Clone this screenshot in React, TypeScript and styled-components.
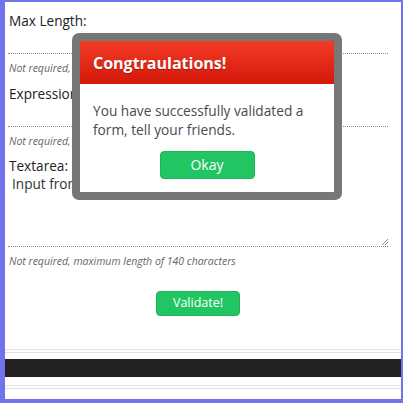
import React from "react";
import styled, { createGlobalStyle } from "styled-components";

const Global = createGlobalStyle`
  html, body { margin: 0; padding: 0; background: #fff; }
  * { box-sizing: border-box; }
`;

const Frame = styled.div`
  position: relative;
  width: 403px;
  height: 403px;
  border-style: solid;
  border-color: #7272ec;
  border-width: 2px 2px 4px 5px;
  background: #fff;
  font-family: "Open Sans", "Liberation Sans", sans-serif;
  color: #222;
  overflow: hidden;
  display: flex;
  flex-direction: column;
`;

const Form = styled.form`
  display: flex;
  flex-direction: column;
  width: 380px;
  margin-left: 3px;
  padding-top: 10px;
`;

const Label = styled.label<{ $top?: number }>`
  display: block;
  margin-top: ${(p) => p.$top ?? 10}px;
  padding-left: 1px;
  font-size: 13.6px;
  line-height: 18px;
  color: #222;
`;

const Input = styled.div`
  height: 24px;
  border-bottom: 1px dotted #8a8a8a;
`;

const TextArea = styled.div`
  position: relative;
  height: 72px;
  padding-left: 4px;
  font-size: 13.6px;
  line-height: 18px;
  color: #333;
  border-bottom: 1px dotted #8a8a8a;
`;

const Grip = styled.svg`
  position: absolute;
  right: 0;
  bottom: 1px;
`;

const Hint = styled.div<{ $top?: number }>`
  margin-top: ${(p) => p.$top ?? 7}px;
  padding-left: 1px;
  font-size: 10.5px;
  line-height: 14px;
  font-style: italic;
  color: #666;
  white-space: nowrap;
  overflow: hidden;
`;

const GreenButton = styled.button<{ $w: number; $h: number; $size: number }>`
  width: ${(p) => p.$w}px;
  height: ${(p) => p.$h}px;
  padding: 0;
  border: 1px solid #1eb45c;
  border-radius: 4px;
  background: #21c663;
  color: #fff;
  font-family: "Open Sans", "Liberation Sans", sans-serif;
  font-size: ${(p) => p.$size}px;
  line-height: 1;
`;

const SubmitRow = styled.div`
  display: flex;
  justify-content: center;
  margin-top: 23px;
`;

const Footer = styled.div`
  display: flex;
  flex-direction: column;
  margin-top: 33px;
`;

const Rule = styled.div<{ $gap: number }>`
  height: 1px;
  margin-top: ${(p) => p.$gap}px;
  background: #e2e2e2;
`;

const DarkBar = styled.div`
  height: 18px;
  margin-top: 6px;
  background: #222;
`;

const Dialog = styled.div`
  position: absolute;
  left: 67px;
  top: 31px;
  width: 270px;
  height: 167px;
  border: 8px solid #777;
  border-radius: 7px;
  background: #fff;
  display: flex;
  flex-direction: column;
`;

const DialogHeader = styled.div`
  height: 43px;
  display: flex;
  align-items: center;
  padding-left: 13px;
  background: linear-gradient(#f43b26, #d3180a);
  color: #fff;
  font-size: 16px;
  font-weight: 700;
  text-shadow: 0 1px 1px rgba(0, 0, 0, 0.25);
`;

const DialogBody = styled.div`
  display: flex;
  flex-direction: column;
  padding: 17px 13px 0;
  font-size: 13.7px;
  line-height: 19px;
  color: #4a4a4a;
`;

const DialogActions = styled.div`
  display: flex;
  justify-content: center;
  margin-top: 12px;
`;

export default function App() {
  return (
    <>
      <Global />
      <Frame>
        <Form>
          <Label $top={0}>Max Length:</Label>
          <Input />
          <Hint>Not required, maximum length of 20 characters</Hint>
          <Label>Expression:</Label>
          <Input />
          <Hint>Not required, must match the expression</Hint>
          <Label $top={9}>Textarea:</Label>
          <TextArea>
            Input from the user
            <Grip width="7" height="7" viewBox="0 0 7 7">
              <path d="M1 7 L7 1 M4 7 L7 4" stroke="#888" strokeWidth="1" />
            </Grip>
          </TextArea>
          <Hint $top={7}>Not required, maximum length of 140 characters</Hint>
          <SubmitRow>
            <GreenButton type="button" $w={84} $h={25} $size={12.5}>
              Validate!
            </GreenButton>
          </SubmitRow>
        </Form>
        <Footer>
          <Rule $gap={0} />
          <Rule $gap={2} />
          <DarkBar />
          <Rule $gap={8} />
          <Rule $gap={2} />
        </Footer>
        <Dialog>
          <DialogHeader>Congtraulations!</DialogHeader>
          <DialogBody>
            <span>
              You have successfully validated a
              <br />
              form, tell your friends.
            </span>
            <DialogActions>
              <GreenButton type="button" $w={95} $h={28} $size={14}>
                Okay
              </GreenButton>
            </DialogActions>
          </DialogBody>
        </Dialog>
      </Frame>
    </>
  );
}
